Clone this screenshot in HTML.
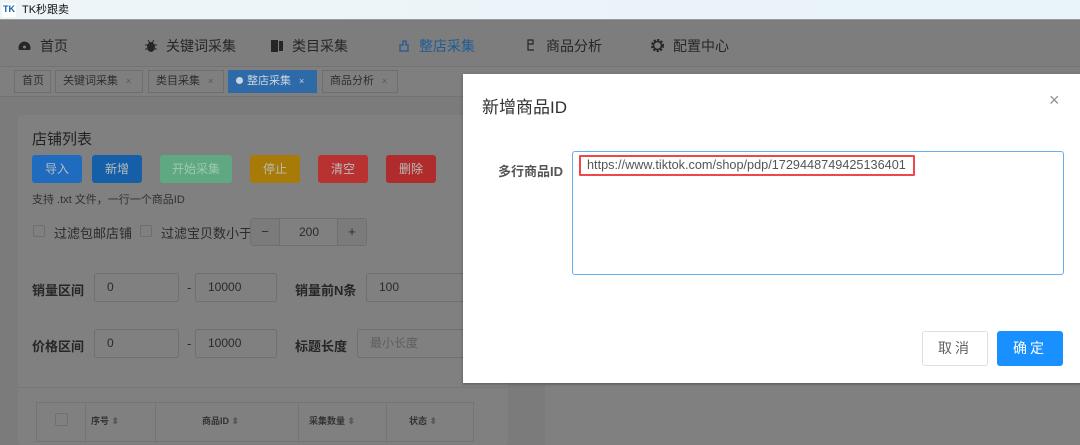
<!DOCTYPE html>
<html><head><meta charset="utf-8"><style>
*{margin:0;padding:0;box-sizing:border-box}
body{width:1080px;height:441px;overflow:hidden;position:relative;background:#7b7b7b;font-family:"Liberation Sans","Noto Sans CJK SC",sans-serif;font-size:13px;color:#2a2a2a}
.a{position:absolute}
.title{left:0;top:0;width:1080px;height:20px;background:linear-gradient(90deg,#eef5f8,#e8f4f8);border-bottom:1px solid #9a9a9a;font-size:11px;color:#111;line-height:20px}
.nav{left:0;top:21px;width:1080px;height:46px;background:#7d7d7d;border-bottom:1px solid #737373}
.nav span{position:absolute;top:15px;font-size:14px;color:#262626}
.tabs{left:0;top:67px;width:1080px;height:30px;background:#7f7f7f;border-bottom:1px solid #737373}
.tab{position:absolute;top:3px;height:23px;border:1px solid #6e6e6e;font-size:11px;line-height:21px;padding-left:7px;color:#2e2e2e;background:#7f7f7f}
.tab i{font-style:normal;font-size:9px;margin-left:8px;color:#555}
.card{background:#808080;border-radius:3px}
.btn{position:absolute;top:155px;height:28px;border-radius:3px;color:#bbb;font-size:12px;text-align:center;line-height:28px}
.inp{position:absolute;height:29px;border:1px solid #6f6f6f;border-radius:3px;background:#808080;font-size:12px;line-height:27px;padding-left:12px;color:#2a2a2a}
.lbl{position:absolute;font-weight:bold;font-size:13px;color:#262626}
</style></head><body>
<div class="a title"><span style="position:absolute;left:2px;top:3px;width:14px;height:14px;background:#fff;color:#1a5fb0;font-size:9px;font-weight:bold;line-height:12px;text-align:center">TK</span><span style="position:absolute;left:22px">TK秒跟卖</span></div>
<div class="a nav">
<svg style="position:absolute;left:18px;top:19px" width="13" height="11"><path d="M1 10 A6 6 0 1 1 12 10 Z" fill="#262626"/><circle cx="6.5" cy="7" r="1.5" fill="#7d7d7d"/></svg><span style="left:40px">首页</span>
<svg style="position:absolute;left:145px;top:18px" width="12" height="13"><ellipse cx="6" cy="8" rx="4" ry="5" fill="#262626"/><path d="M0 6h12M0 10h12M3 1l2 3M9 1l-2 3" stroke="#262626"/></svg><span style="left:166px">关键词采集</span>
<svg style="position:absolute;left:271px;top:18px" width="13" height="13"><rect x="0" y="1" width="7" height="12" fill="#262626"/><rect x="8" y="2" width="4" height="10" fill="#262626"/></svg><span style="left:292px">类目采集</span>
<svg style="position:absolute;left:397px;top:18px" width="14" height="13"><path d="M3 6h3V2h3v4h2v6H3z" fill="none" stroke="#1e5c96" stroke-width="1.3"/></svg><span style="left:419px;color:#1e5c96">整店采集</span>
<svg style="position:absolute;left:526px;top:18px" width="10" height="12"><path d="M2 1h5v4H2zM2 5v6h6" fill="none" stroke="#262626" stroke-width="1.2"/></svg><span style="left:546px">商品分析</span>
<svg style="position:absolute;left:651px;top:18px" width="13" height="13"><circle cx="6.5" cy="6.5" r="5" fill="none" stroke="#262626" stroke-width="3" stroke-dasharray="2 1.3"/><circle cx="6.5" cy="6.5" r="4" fill="none" stroke="#262626" stroke-width="1.5"/></svg><span style="left:673px">配置中心</span>
</div>
<div class="a tabs">
<div class="tab" style="left:14px;width:37px">首页</div>
<div class="tab" style="left:55px;width:88px">关键词采集<i>×</i></div>
<div class="tab" style="left:148px;width:76px">类目采集<i>×</i></div>
<div class="tab" style="left:228px;width:89px;background:#2e6aa8;border-color:#2e6aa8;color:#c8d4e0"><span style="display:inline-block;width:7px;height:7px;border-radius:50%;background:#c8d4e0;margin-right:4px"></span>整店采集<i style="color:#c8d4e0">×</i></div>
<div class="tab" style="left:322px;width:76px">商品分析<i>×</i></div>
</div>
<div class="a card" style="left:18px;top:115px;width:490px;height:330px"></div>
<div class="a" style="left:18px;top:387px;width:490px;height:1px;background:#767676"></div>
<div class="a card" style="left:545px;top:385px;width:535px;height:60px;border-radius:0"></div>
<div class="a" style="left:32px;top:128px;font-size:15px;color:#222">店铺列表</div>
<div class="btn" style="left:32px;width:50px;background:#1e6bbf">导入</div>
<div class="btn" style="left:92px;width:50px;background:#155fa8">新增</div>
<div class="btn" style="left:160px;width:72px;background:#5fa882;color:#9fc9b0">开始采集</div>
<div class="btn" style="left:250px;width:50px;background:#a87a08">停止</div>
<div class="btn" style="left:318px;width:50px;background:#b83232">清空</div>
<div class="btn" style="left:386px;width:50px;background:#b02c2c">删除</div>
<div class="a" style="left:32px;top:191px;font-size:11px;color:#303030">支持 .txt 文件，一行一个商品ID</div>
<div class="a" style="left:33px;top:225px;width:12px;height:12px;border:1px solid #6f6f6f;border-radius:2px"></div>
<div class="a" style="left:54px;top:223px;font-size:13px;color:#2a2a2a">过滤包邮店铺</div>
<div class="a" style="left:140px;top:225px;width:12px;height:12px;border:1px solid #6f6f6f;border-radius:2px"></div>
<div class="a" style="left:161px;top:223px;font-size:13px;color:#2a2a2a">过滤宝贝数小于</div>
<div class="a" style="left:250px;top:218px;width:117px;height:28px;border:1px solid #6f6f6f;border-radius:3px;background:#808080"><span style="position:absolute;left:0;width:29px;height:26px;background:#7b7b7b;border-right:1px solid #6f6f6f;text-align:center;line-height:26px">−</span><span style="position:absolute;left:29px;width:58px;text-align:center;line-height:26px;font-size:12px">200</span><span style="position:absolute;right:0;width:29px;height:26px;background:#7b7b7b;border-left:1px solid #6f6f6f;text-align:center;line-height:26px">+</span></div>
<div class="lbl" style="left:32px;top:280px">销量区间</div>
<div class="inp" style="left:94px;top:273px;width:85px;padding-left:12px">0</div>
<div class="a" style="left:187px;top:280px">-</div>
<div class="inp" style="left:195px;top:273px;width:82px">10000</div>
<div class="lbl" style="left:295px;top:280px">销量前N条</div>
<div class="inp" style="left:366px;top:273px;width:100px;border-right:none">100</div>
<div class="lbl" style="left:32px;top:336px">价格区间</div>
<div class="inp" style="left:94px;top:329px;width:85px">0</div>
<div class="a" style="left:187px;top:336px">-</div>
<div class="inp" style="left:195px;top:329px;width:82px">10000</div>
<div class="lbl" style="left:295px;top:336px">标题长度</div>
<div class="inp" style="left:357px;top:329px;width:110px;border-right:none;color:#5e5e5e">最小长度</div>
<div class="a" style="left:36px;top:402px;width:438px;height:40px;border:1px solid #747474;font-size:9px;font-weight:bold;color:#333">
<div class="a" style="left:18px;top:10px;width:13px;height:13px;border:1px solid #6f6f6f;border-radius:2px"></div>
<div class="a" style="left:48px;top:0;width:1px;height:40px;background:#747474"></div>
<div class="a" style="left:54px;top:11px">序号 <span style="color:#5a5a5a">⬍</span></div>
<div class="a" style="left:118px;top:0;width:1px;height:40px;background:#747474"></div>
<div class="a" style="left:165px;top:11px">商品ID <span style="color:#5a5a5a">⬍</span></div>
<div class="a" style="left:261px;top:0;width:1px;height:40px;background:#747474"></div>
<div class="a" style="left:272px;top:11px">采集数量 <span style="color:#5a5a5a">⬍</span></div>
<div class="a" style="left:349px;top:0;width:1px;height:40px;background:#747474"></div>
<div class="a" style="left:372px;top:11px">状态 <span style="color:#5a5a5a">⬍</span></div>
</div>
<div class="a" style="left:463px;top:74px;width:617px;height:309px;background:#fff;box-shadow:0 1px 3px rgba(0,0,0,.3)">
<div class="a" style="left:19px;top:19px;font-size:17px;color:#303133">新增商品ID</div>
<div class="a" style="left:586px;top:16px;font-size:18px;color:#909399;font-weight:300">×</div>
<div class="a" style="left:35px;top:87px;font-size:13px;font-weight:bold;color:#555">多行商品ID</div>
<div class="a" style="left:109px;top:77px;width:492px;height:124px;border:1px solid #6aaef0;border-radius:3px"></div>
<div class="a" style="left:116px;top:81px;width:336px;height:21px;border:2px solid #f04848;font-size:12.7px;color:#555;line-height:17px;padding-left:6px;border-radius:1px;white-space:nowrap">https://www.tiktok.com/shop/pdp/1729448749425136401</div>
<div class="a" style="left:459px;top:257px;width:66px;height:35px;border:1px solid #dcdfe6;border-radius:3px;text-align:center;line-height:33px;font-size:14px;color:#606266;letter-spacing:3px">取消</div>
<div class="a" style="left:534px;top:257px;width:66px;height:35px;background:#1890ff;border-radius:3px;text-align:center;line-height:35px;font-size:14px;color:#fff;letter-spacing:3px">确定</div>
</div>
</body></html>
